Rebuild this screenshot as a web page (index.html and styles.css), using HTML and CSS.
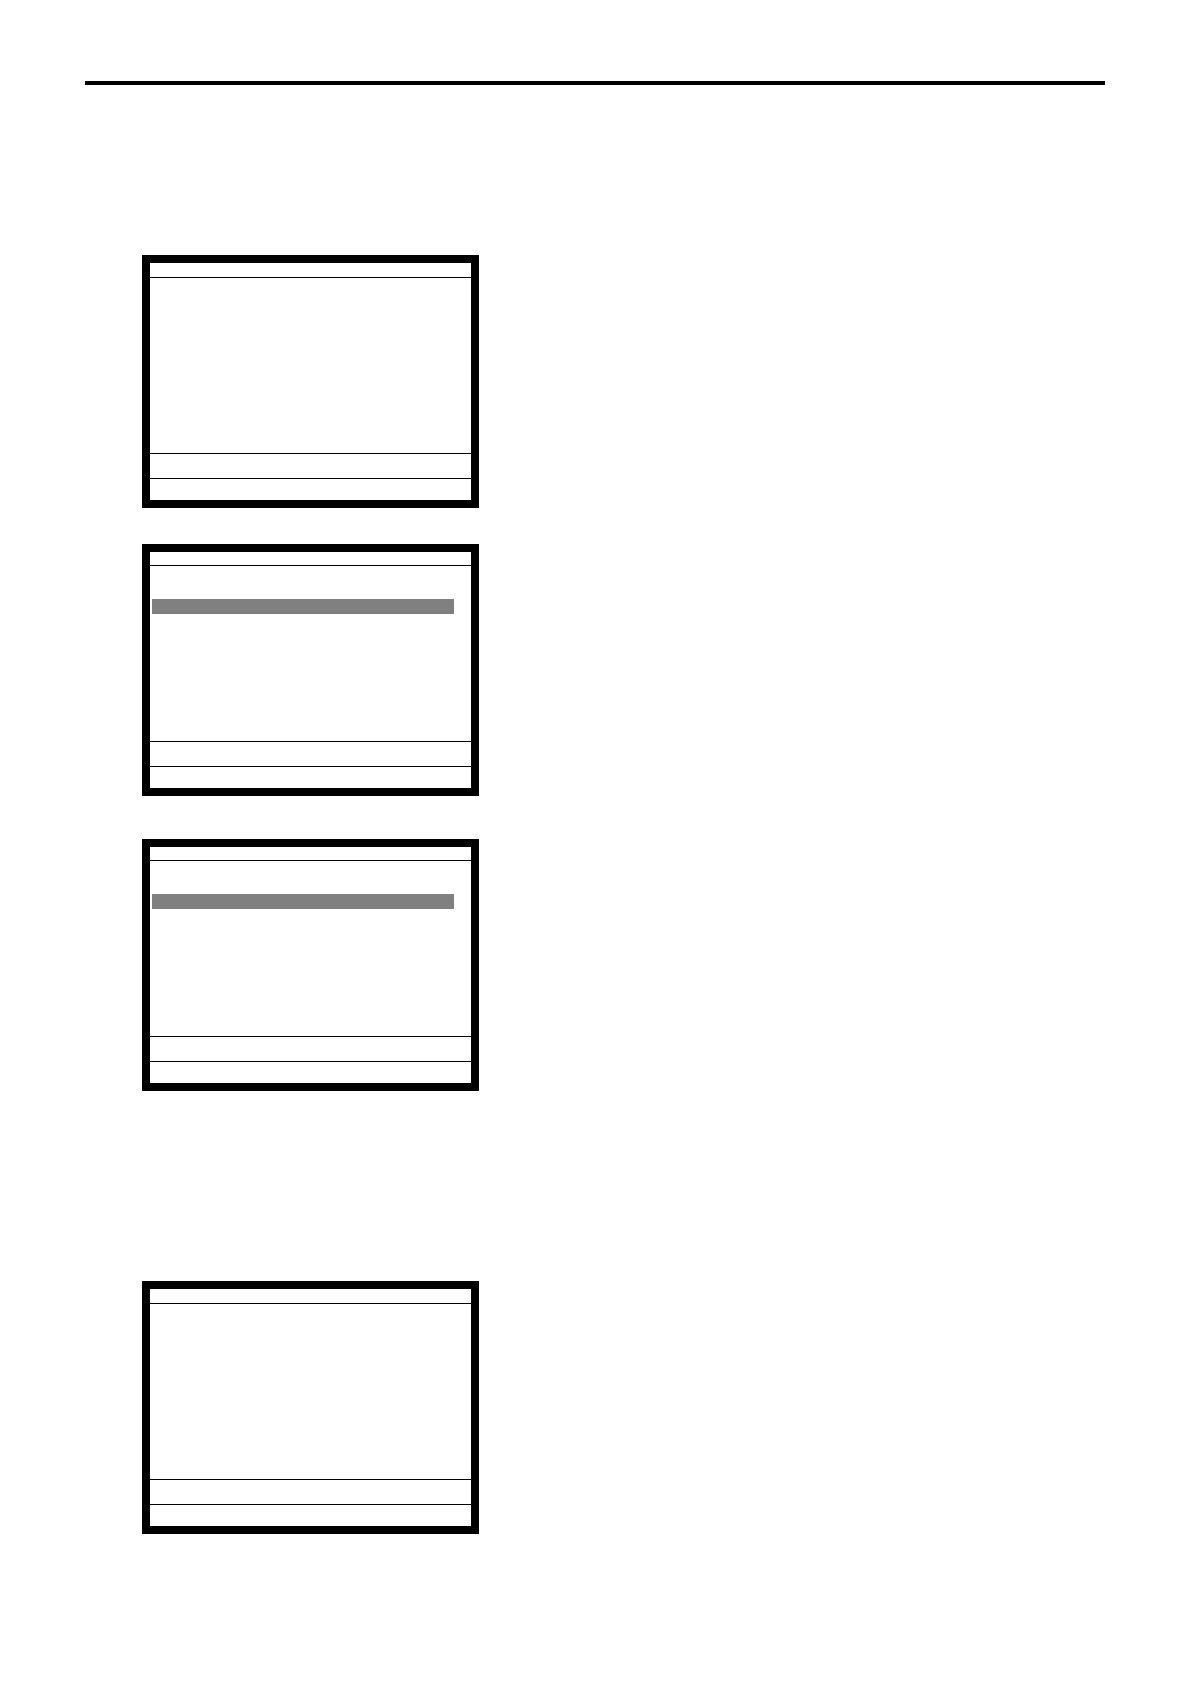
FILE: index.html
```html
<!DOCTYPE html>
<html lang="en">
<head>
  <meta charset="utf-8">
  <meta name="viewport" content="width=device-width, initial-scale=1">
  <title>Screens</title>
  <link rel="stylesheet" href="styles.css">
</head>
<body>
  <header class="page-rule"></header>
  <main class="page">
    <section class="screens">
      <div class="screen">
        <div class="screen-title"></div>
        <div class="screen-body"></div>
        <div class="screen-message"></div>
        <div class="screen-status"></div>
      </div>
      <div class="screen screen-list">
        <div class="screen-title"></div>
        <div class="screen-body"><div class="selected-row"></div></div>
        <div class="screen-message"></div>
        <div class="screen-status"></div>
      </div>
      <div class="screen screen-list screen-last">
        <div class="screen-title"></div>
        <div class="screen-body"><div class="selected-row"></div></div>
        <div class="screen-message"></div>
        <div class="screen-status"></div>
      </div>
    </section>
    <section class="screens">
      <div class="screen">
        <div class="screen-title"></div>
        <div class="screen-body"></div>
        <div class="screen-message"></div>
        <div class="screen-status"></div>
      </div>
    </section>
  </main>
</body>
</html>
```
FILE: styles.css
```css
* {
  box-sizing: border-box;
}

body {
  margin: 0;
  padding: 81px 85px 150px;
  background: #fff;
  font-family: "Liberation Sans", Arial, sans-serif;
}

.page-rule {
  border-top: 4px solid #000;
}

.page {
  display: flex;
  flex-direction: column;
  gap: 190px;
  padding: 170px 57px 0;
}

.screens {
  display: flex;
  flex-direction: column;
  gap: 36px;
}

.screen {
  width: 100%;
  max-width: 337px;
  border: 8px solid #000;
}

.screen-title {
  height: 15px;
  border-bottom: 1px solid #000;
}

.screen-list .screen-title {
  height: 14px;
}

.screen-last {
  margin-top: 7px;
}

.screen-body {
  min-height: 175px;
  padding: 33px 17px 0 2px;
}

.selected-row {
  height: 15px;
  background: #808080;
}

.screen-message {
  height: 25px;
  border-top: 1px solid #000;
}

.screen-status {
  height: 22px;
  border-top: 1px solid #000;
}
```
